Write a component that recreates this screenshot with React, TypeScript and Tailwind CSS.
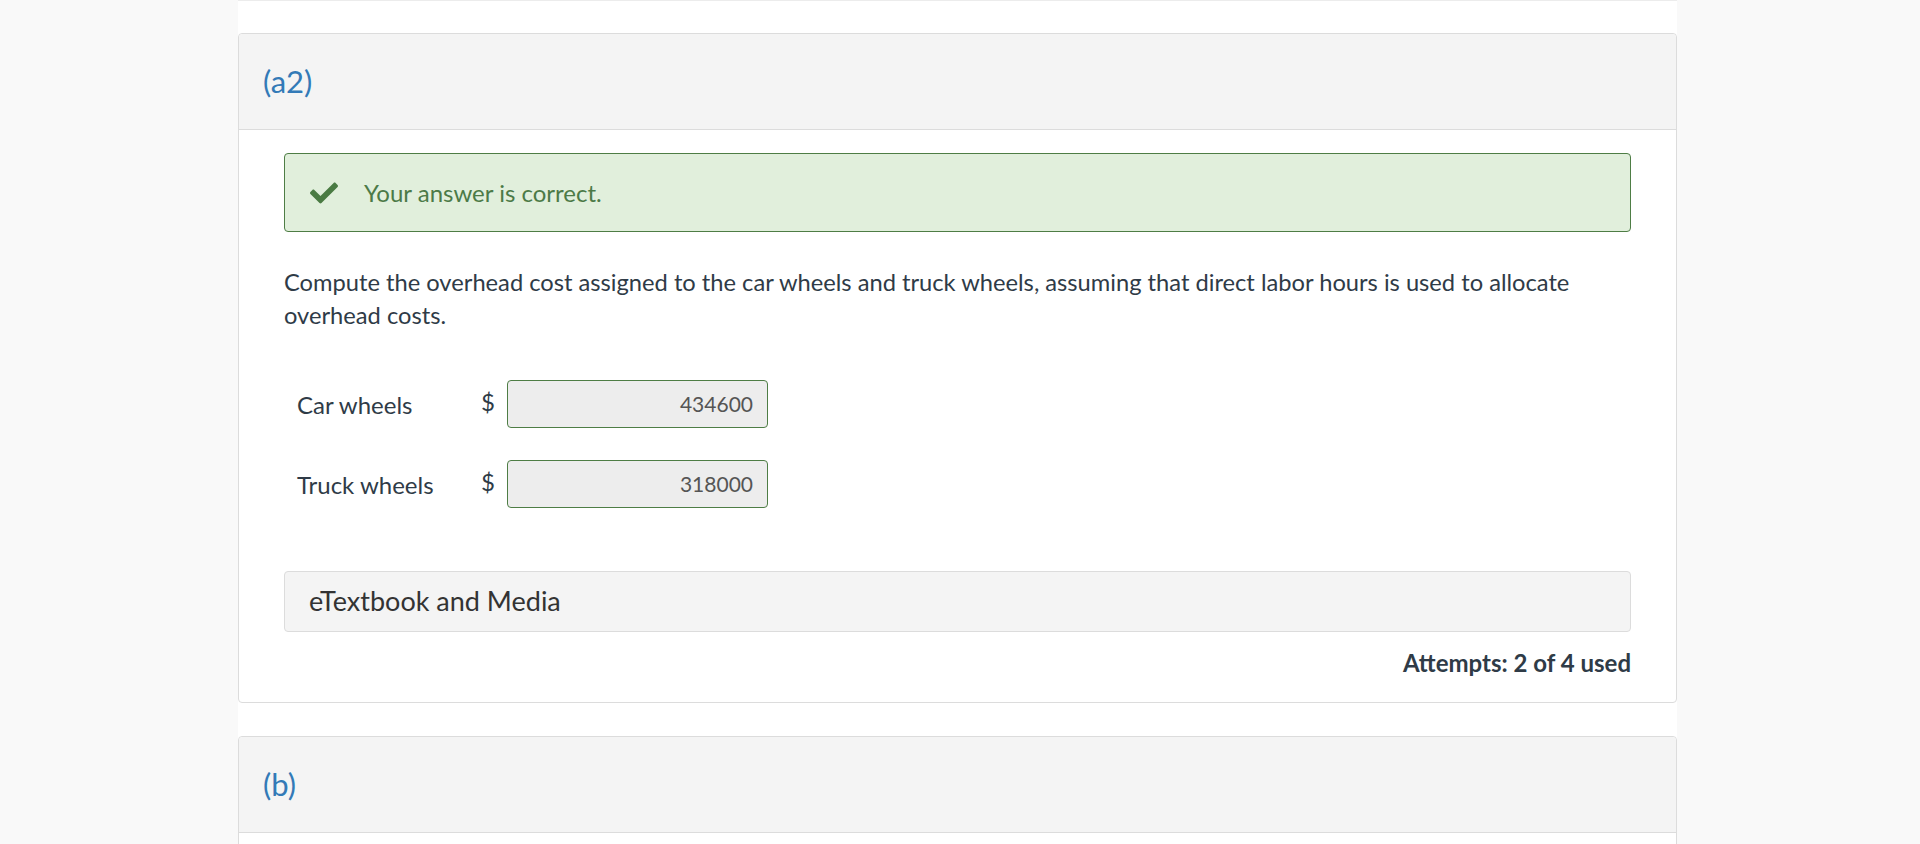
import { FaCheck } from "react-icons/fa";

function PartHeader({ label }: { label: string }) {
  return (
    <div className="h-[96px] flex items-center px-6 bg-[#f4f4f4] border-b border-[#dcdcdc] rounded-t text-[31px] text-[#337ab7]">
      {label}
    </div>
  );
}

function AnswerRow({ label, value }: { label: string; value: string }) {
  return (
    <div className="flex items-center">
      <span className="w-[197px] pl-[13px] text-[24px] leading-[33px] text-[#2f3b47]">{label}</span>
      <span className="w-[26px] mb-[6px] text-[24px] leading-[33px] text-[#2f3b47]">$</span>
      <div className="w-[261px] h-12 flex items-center justify-end pr-[14px] bg-[#ededed] border border-[#4e7d45] rounded-sm text-[21px] text-[#555]">
        {value}
      </div>
    </div>
  );
}

export default function App() {
  return (
    <div className="h-screen overflow-hidden bg-[#f9f9f9] font-['Lato',sans-serif]">
      <div className="ml-[238px] w-[1439px] h-full bg-white border-t border-[#ececec] pt-[32px] flex flex-col gap-[33px]">
        <section className="rounded border border-[#dcdcdc]">
          <PartHeader label="(a2)" />
          <div className="px-[45px] pt-[23px] pb-[23px]">
            <div className="h-[79px] flex items-center pl-[25px] bg-[#e1efdc] border border-[#4e7d45] rounded text-[#4c7a47]">
              <FaCheck size={28} className="text-[#4a7b43]" />
              <span className="ml-[26px] text-[24px]">Your answer is correct.</span>
            </div>
            <p className="mt-[34px] text-[23.7px] leading-[33px] text-[#2f3b47]">
              Compute the overhead cost assigned to the car wheels and truck wheels, assuming that direct labor hours is used
              to allocate overhead costs.
            </p>
            <div className="mt-[48px] flex flex-col gap-8">
              <AnswerRow label="Car wheels" value="434600" />
              <AnswerRow label="Truck wheels" value="318000" />
            </div>
            <div className="mt-[63px] h-[61px] flex items-center px-6 bg-[#f4f4f4] border border-[#dcdcdc] rounded text-[27px] text-[#333]">
              eTextbook and Media
            </div>
            <div className="mt-[15px] text-right text-[24px] leading-[32px] font-bold text-[#2f3b47]">
              Attempts: 2 of 4 used
            </div>
          </div>
        </section>
        <section className="rounded border border-[#dcdcdc]">
          <PartHeader label="(b)" />
          <div className="h-[200px]" />
        </section>
      </div>
    </div>
  );
}
